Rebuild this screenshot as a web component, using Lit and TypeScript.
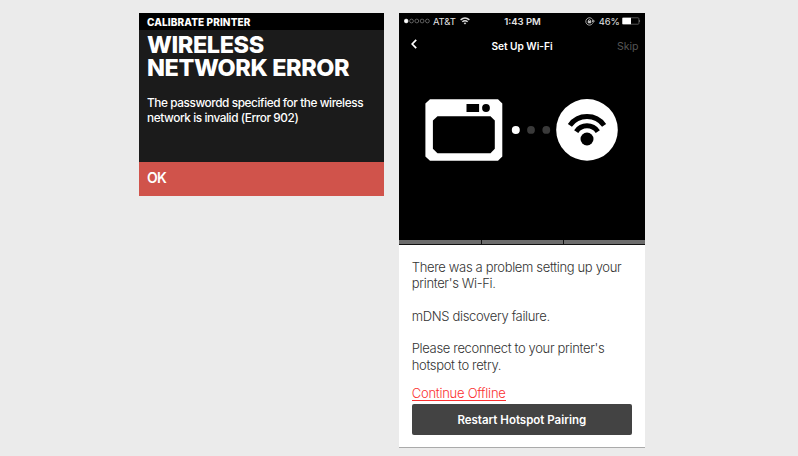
import { LitElement, html, css, svg } from "lit";
import { customElement } from "lit/decorators.js";

@customElement("printer-screen")
class PrinterScreen extends LitElement {
  static styles = css`
    :host { display: flex; flex-direction: column; box-sizing: border-box; width: 245px; height: 183px;
      background: #1b1b1b; color: #fff; font-family: Inter, "Liberation Sans", sans-serif; white-space: nowrap; }
    .title { height: 17px; background: #000; padding-left: 8px; font-size: 10px; line-height: 18px; font-weight: 800; letter-spacing: 0.11px; }
    h1 { margin: 3px 0 0 8px; font-size: 23.5px; line-height: 23.5px; font-weight: 800; letter-spacing: -0.42px; }
    .row { display: block; width: max-content; }
    p { margin: 16px 0 0 8px; font-size: 11.8px; line-height: 15.3px; font-weight: 500; letter-spacing: -0.41px; }
    .ok { margin-top: auto; height: 33.4px; background: #d0534b; padding-left: 8px; font-size: 14px; line-height: 31px; font-weight: 600; letter-spacing: -0.8px; }
  `;
  render() {
    return html`
      <div class="title">CALIBRATE PRINTER</div>
      <h1><span class="row">WIRELESS</span><span class="row">NETWORK ERROR</span></h1>
      <p><span class="row">The passwordd specified for the wireless</span><span class="row">network is invalid (Error 902)</span></p>
      <div class="ok">OK</div>
    `;
  }
}

@customElement("phone-screen")
class PhoneScreen extends LitElement {
  static styles = css`
    :host { display: flex; flex-direction: column; box-sizing: border-box; width: 245px; height: 435px;
      background: #fff; border-bottom: 1px solid #aaa; font-family: Inter, "Liberation Sans", sans-serif; white-space: nowrap; }
    .dark { height: 227px; background: #000; color: #fff; display: flex; flex-direction: column; }
    .status { display: grid; grid-template-columns: 1fr auto 1fr; align-items: center; height: 17px; padding: 0 4px 0 5px; font-size: 9.5px; color: #e4e4e4; }
    .left, .right { display: flex; align-items: center; }
    .right { justify-content: flex-end; }
    .signal { width: 27px; height: 6px; margin-right: 1.5px; }
    .carrier { letter-spacing: -0.1px; }
    .wifi { width: 10px; height: 8px; margin-left: 4px; }
    .time { font-weight: 600; font-size: 9.5px; }
    .lock { width: 10px; height: 9px; margin-right: 4px; }
    .percent { letter-spacing: -0.2px; }
    .battery { width: 19px; height: 8px; margin-left: 2px; }
    .nav { display: grid; grid-template-columns: 1fr auto 1fr; align-items: center; height: 32px; padding: 0 6px 0 12px; font-size: 10.2px; }
    .back { width: 6px; height: 10px; margin-top: -3px; }
    .heading { font-weight: 600; margin-right: 6px; letter-spacing: -0.05px; }
    .skip { justify-self: end; color: #555; font-size: 10.6px; margin-top: 1px; }
    .art { width: 194px; height: 64px; margin: 36px 0 0 26px; }
    .steps { display: grid; grid-template-columns: 82px 81px 1fr; gap: 1px; height: 4px; padding-bottom: 1px; background: #111; }
    .step { background: #6c6c6c; }
    .body { padding: 14px 12px 0 12.4px; font-size: 13px; line-height: 16.6px; font-weight: 300; color: #333; }
    .row { display: block; width: max-content; }
    p { margin: 0 0 16px; letter-spacing: -0.34px; }
    p.last { margin-bottom: 13px; }
    a { display: block; width: max-content; height: 14px; line-height: 14px; color: #fb3030; border-bottom: 1px solid #fb3030; letter-spacing: -0.26px; }
    .button { display: block; width: 220px; height: 31px; margin-top: 3px; padding: 0; border: 0; border-radius: 2px; background: #434343; color: #fff; font: 600 11.5px Inter, sans-serif; }
  `;
  render() {
    const dots = [0, 1, 2, 3, 4].map((i) =>
      svg`<circle cx=${2.2 + i * 5.3} cy="3" r="1.9" fill=${i ? "none" : "#fff"} stroke=${i ? "#999" : "#fff"} stroke-width=".6"/>`);
    return html`
      <div class="dark">
        <div class="status">
          <div class="left">
            <svg class="signal" viewBox="0 0 27 6">${dots}</svg><span class="carrier">AT&amp;T</span>
            <svg class="wifi" viewBox="0 0 10 8" fill="none" stroke="#ddd" stroke-width="1.4">
              <path d="M.6 2.9Q5-.9 9.4 2.9M2.3 4.8Q5 2.5 7.7 4.8"/><path d="M3.6 6Q5 4.9 6.4 6L5 7.6Z" fill="#ddd" stroke="none"/>
            </svg>
          </div>
          <span class="time">1:43 PM</span>
          <div class="right">
            <svg class="lock" viewBox="0 0 10 9" fill="none" stroke="#ccc" stroke-width=".8">
              <path d="M7.7 6.3A3.7 3.7 0 1 1 8.2 4.2M7 3.9h2.4L8.2 5.5Z"/><path d="M3.2 4.1h2.6v1.8H3.2Z" fill="#ddd"/><path d="M3.5 4V3.2Q4.5 1.8 5.5 3.2V4"/>
            </svg>
            <span class="percent">46%</span>
            <svg class="battery" viewBox="0 0 19 8"><rect x=".5" y=".8" width="16.4" height="6.4" rx=".8" fill="none" stroke="#777" stroke-width=".7"/><rect x=".4" y=".8" width="8.6" height="6.4" fill="#fff"/><path d="M17.5 2.7Q18.8 4 17.5 5.3Z" fill="#ccc"/></svg>
          </div>
        </div>
        <div class="nav">
          <svg class="back" viewBox="0 0 6 10" fill="none" stroke="#fff" stroke-width="1.7"><path d="M5.2 .8L1.2 5L5.2 9.2"/></svg>
          <span class="heading">Set Up Wi-Fi</span>
          <span class="skip">Skip</span>
        </div>
        <svg class="art" viewBox="425 98 194 64">
          <path fill="#fff" d="M430 99.2H498L502.3 103.5V156.5L498 160.8H430L425.4 156.5V103.5Z"/>
          <path d="M437.5 116.2H490.5L494.8 120.5V148.8L490.5 153.3H437.5L432.9 148.8V120.5Z"/>
          <rect x="466.5" y="104" width="12.6" height="8"/><ellipse cx="486" cy="108" rx="3.9" ry="4.1"/>
          <circle cx="515.8" cy="129.9" r="4" fill="#fff"/><circle cx="531" cy="129.9" r="3.9" fill="#3a3a3a"/><circle cx="546.3" cy="129.9" r="3.9" fill="#3a3a3a"/>
          <circle cx="587" cy="129.9" r="30.8" fill="#fff"/>
          <g fill="none" stroke="#000" stroke-width="5"><path d="M569.9 125.4A21 21 0 0 1 604.1 125.4"/><path d="M576.2 131.6A13 13 0 0 1 597.8 131.6"/></g>
          <circle cx="587" cy="139" r="6.5"/>
        </svg>
      </div>
      <div class="steps"><div class="step"></div><div class="step"></div><div class="step"></div></div>
      <div class="body">
        <p><span class="row">There was a problem setting up your</span><span class="row">printer's Wi-Fi.</span></p>
        <p><span class="row">mDNS discovery failure.</span></p>
        <p class="last"><span class="row">Please reconnect to your printer's</span><span class="row">hotspot to retry.</span></p>
        <a>Continue Offline</a>
        <button class="button">Restart Hotspot Pairing</button>
      </div>
    `;
  }
}

@customElement("app-root")
class AppRoot extends LitElement {
  static styles = css`
    :host { display: flex; align-items: flex-start; gap: 15.4px; box-sizing: border-box; width: 798px; height: 456px; padding: 12.5px 0 0 139px; background: #ebebeb; overflow: hidden; }
    phone-screen { width: 245.2px; }
  `;
  render() {
    return html`<printer-screen></printer-screen><phone-screen></phone-screen>`;
  }
}
